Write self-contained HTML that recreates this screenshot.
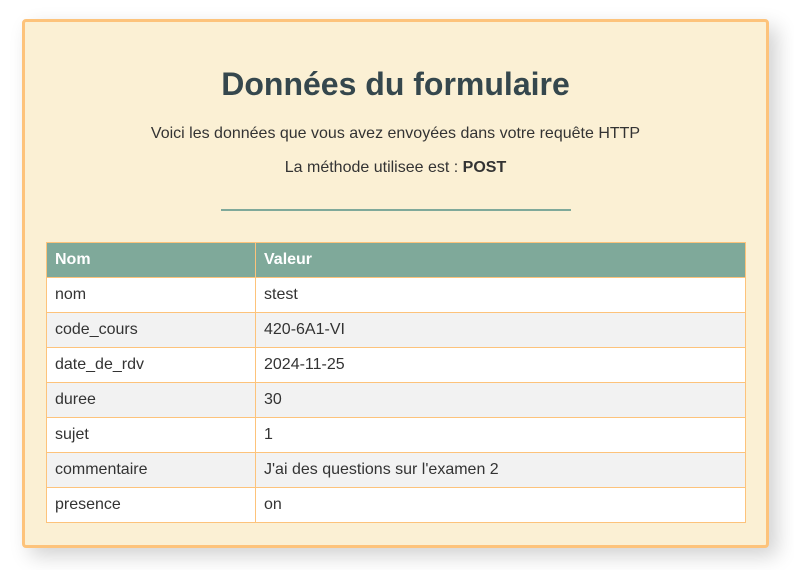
<!DOCTYPE html>
<html><head><style>
body{margin:0;background:#fff;width:794px;height:570px;overflow:hidden;font-family:"Liberation Sans",sans-serif;color:#333}
.box{position:absolute;left:22px;top:19px;width:741px;height:523px;border:3px solid #fdc37b;border-radius:4px;background:#fbf0d4;box-shadow:8px 8px 20px rgba(0,0,0,0.18)}
h1{position:absolute;left:0;right:0;top:62px;margin:0;text-align:center;font-size:32px;font-weight:bold;color:#35474d}
p{position:absolute;left:0;right:0;margin:0;text-align:center;font-size:16px;color:#333}
.line{position:absolute;left:196px;top:187px;width:350px;height:2px;background:#7fa99a}
table{position:absolute;left:21px;top:220px;width:700px;border-collapse:collapse;font-size:16px}
td,th{border:1px solid #fdc37b;height:34px;padding:0 8px;text-align:left}
th{background:#7fa99a;color:#fff;font-weight:bold}
td:first-child,th:first-child{width:192px}
tr:nth-child(odd) td{background:#f2f2f2}
tr:nth-child(even) td{background:#fff}
</style></head><body>
<div class="box">
<h1 style="top:44px">Données du formulaire</h1>
<p style="top:103px">Voici les données que vous avez envoyées dans votre requête HTTP</p>
<p style="top:137px">La méthode utilisee est : <b>POST</b></p>
<div class="line"></div>
<table>
<tr><th>Nom</th><th>Valeur</th></tr>
<tr><td>nom</td><td>stest</td></tr>
<tr><td>code_cours</td><td>420-6A1-VI</td></tr>
<tr><td>date_de_rdv</td><td>2024-11-25</td></tr>
<tr><td>duree</td><td>30</td></tr>
<tr><td>sujet</td><td>1</td></tr>
<tr><td>commentaire</td><td>J'ai des questions sur l'examen 2</td></tr>
<tr><td>presence</td><td>on</td></tr>
</table>
</div>
</body></html>
